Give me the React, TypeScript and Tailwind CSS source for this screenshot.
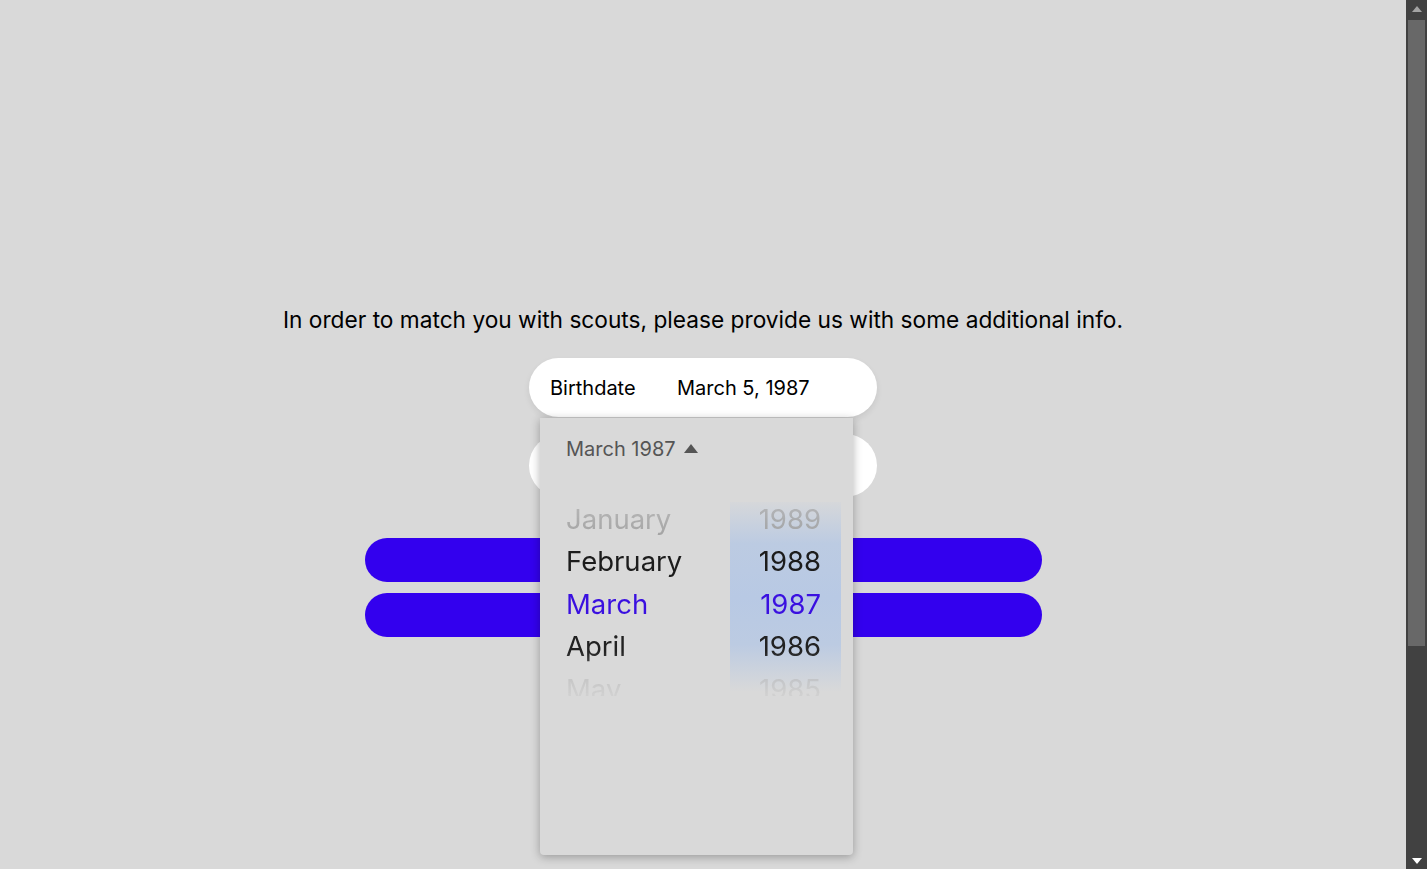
import React from 'react';

const months = [
  { m: 'January', y: '1989', cls: 'text-[#a3a3a3]' },
  { m: 'February', y: '1988', cls: 'text-[#1c1c1c]' },
  { m: 'March', y: '1987', cls: 'text-[#3a10e0]' },
  { m: 'April', y: '1986', cls: 'text-[#222222]' },
  { m: 'May', y: '1985', cls: 'text-[#b5b5b5]' },
];

function App() {
  return (
    <div className="h-screen flex overflow-hidden bg-[#d9d9d9] font-['Inter',sans-serif]">
      <main className="flex-1 flex flex-col items-center pt-[305px]">
        <p className="text-[22.7px] leading-[30px] text-black">
          In order to match you with scouts, please provide us with some additional info.
        </p>

        <div className="relative mt-[23px] w-[348px]">
          <div className="h-[59px] rounded-full bg-white shadow-[0_3px_6px_rgba(0,0,0,0.08)] flex items-center px-[21px] pt-[1px] text-[20px] text-black">
            <span className="w-[127px]">Birthdate</span>
            <span>March 5, 1987</span>
          </div>

          <div className="absolute left-[11px] top-[60px] z-10 w-[313px] h-[437px] bg-[#d9d9d9] rounded-b-[4px] shadow-[0_2px_10px_rgba(0,0,0,0.3)]">
            <div className="flex items-center gap-[8px] pl-[26px] pt-[18px] text-[20px] leading-[26px] text-[#555555]">
              <span>March 1987</span>
              <svg width="14" height="9" viewBox="0 0 14 9" className="mt-[-2px]">
                <path d="M0 9 L7 0 L14 9 Z" fill="#555555" />
              </svg>
            </div>

            <div className="relative mt-[36px] h-[198px] overflow-hidden">
              <div className="absolute right-[12px] top-[4px] bottom-[4px] w-[111px] bg-[linear-gradient(to_bottom,rgba(184,201,228,0.1),#bccbe2_22%,#b8c9e4_50%,#bccbe2_75%,rgba(184,201,228,0))]" />
              <div className="relative [mask-image:linear-gradient(to_bottom,rgba(0,0,0,0.55),#000_18%,#000_72%,rgba(0,0,0,0.25)_92%,transparent)]">
                {months.map((r) => (
                  <div key={r.m} className={`flex items-center justify-between h-[42.5px] pl-[26px] pr-[32px] text-[27.5px] ${r.cls}`}>
                    <span>{r.m}</span>
                    <span>{r.y}</span>
                  </div>
                ))}
              </div>
            </div>
          </div>
        </div>

        <div className="mt-[17px] w-[348px] h-[63px] rounded-full bg-white" />

        <div className="mt-[41px] w-[677px] h-[44px] rounded-full bg-[#3300ee]" />
        <div className="mt-[11px] w-[677px] h-[44px] rounded-full bg-[#3300ee]" />
      </main>

      {/* scrollbar */}
      <aside className="w-[21px] shrink-0 bg-[#414141] flex flex-col items-center">
        <div className="h-[17px] flex items-center justify-center">
          <svg width="10" height="6" viewBox="0 0 10 6"><path d="M0 6 L5 0 L10 6 Z" fill="#a3a3a3" /></svg>
        </div>
        <div className="mt-[3px] w-[17px] h-[626px] bg-[#686868]" />
        <div className="flex-1" />
        <div className="h-[17px] flex items-center justify-center">
          <svg width="10" height="6" viewBox="0 0 10 6"><path d="M0 0 L5 6 L10 0 Z" fill="#ffffff" /></svg>
        </div>
      </aside>
    </div>
  );
}

export default App;
